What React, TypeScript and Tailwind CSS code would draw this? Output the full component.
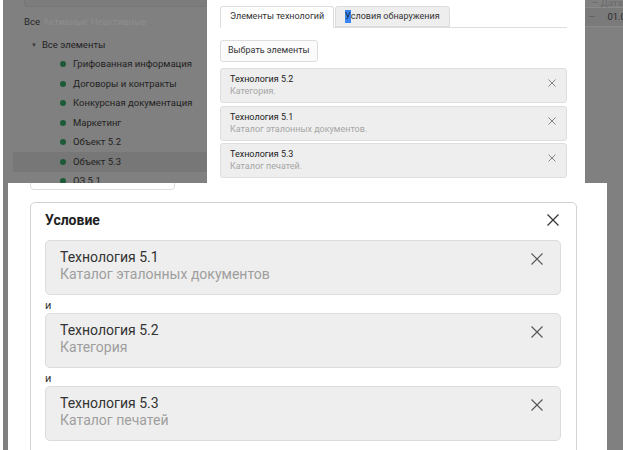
const treeItems = [
  'Грифованная информация',
  'Договоры и контракты',
  'Конкурсная документация',
  'Маркетинг',
  'Объект 5.2',
  'Объект 5.3',
  'ОЗ 5.1',
];

const popupCards = [
  { title: 'Технология 5.2', sub: 'Категория.' },
  { title: 'Технология 5.1', sub: 'Каталог эталонных документов.' },
  { title: 'Технология 5.3', sub: 'Каталог печатей.' },
];

const conditionItems = [
  { title: 'Технология 5.1', sub: 'Каталог эталонных документов' },
  { title: 'Технология 5.2', sub: 'Категория' },
  { title: 'Технология 5.3', sub: 'Каталог печатей' },
];

function CloseIcon({ size, color, width }: { size: number; color: string; width: number }) {
  const e = size - 0.5;
  return (
    <svg width={size} height={size} viewBox={`0 0 ${size} ${size}`} className="shrink-0">
      <path d={`M0.5 0.5L${e} ${e}M${e} 0.5L0.5 ${e}`} stroke={color} strokeWidth={width} fill="none" />
    </svg>
  );
}

function CatalogTree() {
  return (
    <div className="w-[204px] shrink-0 overflow-hidden text-[9.5px] text-[#1f1f1f]">
      <div className="ml-[21px] mt-[-19px] h-[26px] border border-[#767676] rounded-[3px] bg-[#7c7c7c] flex items-end pl-[10px] pb-[3px] text-[#3a3a3a] whitespace-nowrap">
        Поиск по каталогам...
      </div>
      <div className="ml-[21px] mt-[9px] h-[12px] leading-[12px] flex gap-[3px] whitespace-nowrap">
        <span className="text-[#262626]">Все</span>
        <span className="text-[#8e8e8e]">Активные</span>
        <span className="text-[#8e8e8e]">Неактивные</span>
      </div>
      <div className="mt-[7px] ml-[10px]">
        <div className="h-[19.5px] flex items-center pl-[18px] gap-[5px] whitespace-nowrap">
          <span className="text-[6px] text-[#3a3a3a]">▼</span>
          <span>Все элементы</span>
        </div>
        {treeItems.map((name) => (
          <div
            key={name}
            className={`h-[19.5px] flex items-center pl-[47px] gap-[7px] whitespace-nowrap ${name === 'Объект 5.3' ? 'bg-[#777777]' : ''}`}
          >
            <span className="w-[6px] h-[6px] rounded-full bg-[#1d5a37] shrink-0" />
            <span>{name}</span>
          </div>
        ))}
      </div>
    </div>
  );
}

function TechnologyPopup() {
  return (
    <div className="w-[378px] shrink-0 bg-white pl-[13px] pr-[18px] pt-[6px] text-[9px] text-[#333]">
      <div className="flex border-b border-[#dddddd]">
        <div className="h-[22px] px-[9px] flex items-center border border-[#dddddd] border-b-white -mb-px rounded-t-[3px] bg-white">
          Элементы технологий
        </div>
        <div className="ml-[1px] h-[21px] px-[9px] flex items-center border border-[#dddddd] rounded-t-[3px] bg-[#eeeeee]">
          <span className="bg-[#3a86f0] text-[#10264a]">У</span>
          <span>словия обнаружения</span>
        </div>
      </div>
      <button className="mt-[12px] h-[22px] px-[7px] border border-[#dddddd] rounded-[3px] bg-[#fbfbfb] text-[9px] text-[#333]">
        Выбрать элементы
      </button>
      <div className="mt-[6px] flex flex-col gap-[2.5px]">
        {popupCards.map((c) => (
          <div
            key={c.title}
            className="h-[35px] flex items-start justify-between pl-[9px] pr-[10px] pt-[4px] bg-[#eeeeee] border border-[#dedede] rounded-[3px]"
          >
            <div className="leading-[12px]">
              <div className="text-[#222]">{c.title}</div>
              <div className="text-[#a6a6a6]">{c.sub}</div>
            </div>
            <div className="mt-[6px]">
              <CloseIcon size={8} color="#777" width={0.9} />
            </div>
          </div>
        ))}
      </div>
    </div>
  );
}

function DateColumn() {
  return (
    <div className="flex-1 overflow-hidden text-[9.5px] text-[#2a2a2a] whitespace-nowrap">
      <div className="h-[8px] flex items-end pl-[6px] text-[#6a6a6a] leading-[8px] border-b border-[#8a8a8a]">
        — Дата
      </div>
      <div className="h-[19px] flex items-center pl-[3px] gap-[12px] bg-[#7a7a7a] border-b border-[#8a8a8a]">
        <span className="text-[#5a5a5a]">—</span>
        <span>01.01.2020</span>
      </div>
    </div>
  );
}

function ConditionCard() {
  return (
    <div className="ml-[22px] mt-[12px] w-[547px] h-[260px] border border-[#d3d3d3] rounded-[5px] pl-[14px] pr-[15px] pt-[7px]">
      <div className="h-[20px] flex items-center justify-between">
        <span className="text-[14px] font-bold text-[#222]">Условие</span>
        <span className="mr-[2px]">
          <CloseIcon size={12} color="#333" width={1.2} />
        </span>
      </div>
      <div className="mt-[10px]">
        {conditionItems.map((item, i) => (
          <div key={item.title}>
            {i > 0 && <div className="h-[18px] pt-[3px] text-[11px] leading-[15px] text-[#333]">и</div>}
            <div className="h-[55px] flex items-start justify-between pl-[14px] pr-[17px] pt-[8px] bg-[#eeeeee] border border-[#dcdcdc] rounded-[5px]">
              <div className="text-[14px] leading-[17px]">
                <div className="text-[#333]">{item.title}</div>
                <div className="text-[#9e9e9e]">{item.sub}</div>
              </div>
              <div className="mt-[4px]">
                <CloseIcon size={12} color="#555" width={1.1} />
              </div>
            </div>
          </div>
        ))}
      </div>
    </div>
  );
}

export default function App() {
  return (
    <div className="w-[623px] h-[450px] overflow-hidden bg-white font-['Roboto',sans-serif]">
      <div className="h-[183px] pl-[3px] flex">
        <div className="flex flex-1 bg-[#808080] overflow-hidden">
          <CatalogTree />
          <TechnologyPopup />
          <DateColumn />
        </div>
      </div>
      <div className="h-[267px] flex">
        <div className="w-[3px] shrink-0" />
        <div className="w-[5px] shrink-0 bg-[#808080]" />
        <div className="flex-1 overflow-hidden">
          <div className="ml-[22px] mt-[-13px] w-[145px] h-[20px] border border-[#dddddd] rounded-[4px]" />
          <ConditionCard />
        </div>
        <div className="w-[16px] shrink-0 bg-[#808080]" />
      </div>
    </div>
  );
}
